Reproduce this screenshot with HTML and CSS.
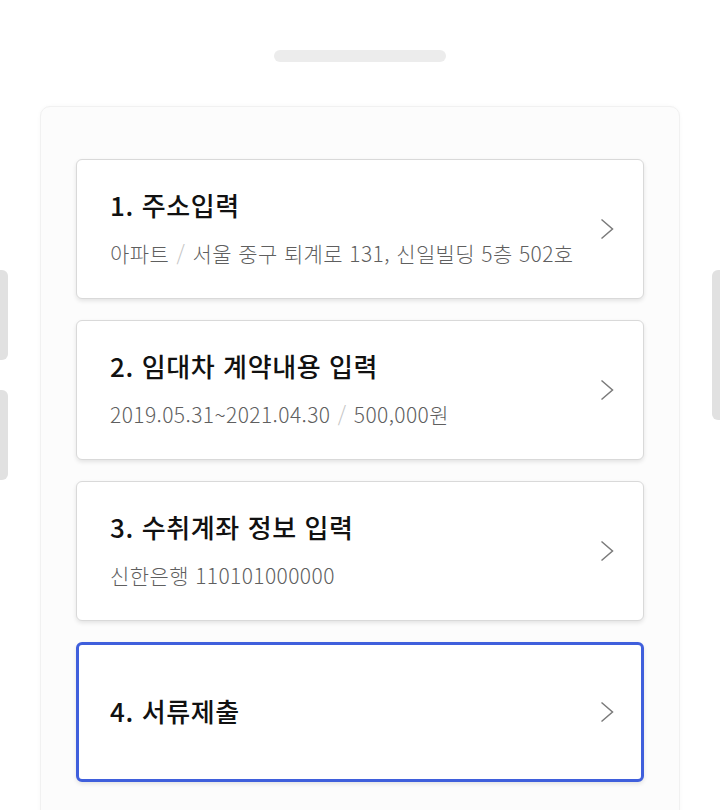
FILE: index.html
```html
<!DOCTYPE html>
<html lang="ko">
<head>
<meta charset="utf-8">
<title>신청</title>
<link rel="stylesheet" href="styles.css">
</head>
<body>
<div class="sheet">
  <div class="handle"></div>
  <div class="stage">
    <div class="side side-left">
      <div class="peek peek-l1"></div>
      <div class="peek peek-l2"></div>
    </div>
    <div class="panel">
      <a class="card">
        <div class="card-text">
          <div class="title">1. 주소입력</div>
          <div class="sub">아파트 <span class="sep">/</span> 서울 중구 퇴계로 131, 신일빌딩 5층 502호</div>
        </div>
        <svg class="chev" width="14" height="22" viewBox="0 0 14 22"><path d="M1.5 1.5 L12.5 11 L1.5 20.5" fill="none" stroke="#7a7a7a" stroke-width="1.5"/></svg>
      </a>
      <a class="card">
        <div class="card-text">
          <div class="title">2. 임대차 계약내용 입력</div>
          <div class="sub">2019.05.31~2021.04.30 <span class="sep">/</span> 500,000원</div>
        </div>
        <svg class="chev" width="14" height="22" viewBox="0 0 14 22"><path d="M1.5 1.5 L12.5 11 L1.5 20.5" fill="none" stroke="#7a7a7a" stroke-width="1.5"/></svg>
      </a>
      <a class="card">
        <div class="card-text">
          <div class="title">3. 수취계좌 정보 입력</div>
          <div class="sub">신한은행 110101000000</div>
        </div>
        <svg class="chev" width="14" height="22" viewBox="0 0 14 22"><path d="M1.5 1.5 L12.5 11 L1.5 20.5" fill="none" stroke="#7a7a7a" stroke-width="1.5"/></svg>
      </a>
      <a class="card card-active">
        <div class="card-text">
          <div class="title">4. 서류제출</div>
        </div>
        <svg class="chev" width="14" height="22" viewBox="0 0 14 22"><path d="M1.5 1.5 L12.5 11 L1.5 20.5" fill="none" stroke="#7a7a7a" stroke-width="1.5"/></svg>
      </a>
    </div>
    <div class="side side-right">
      <div class="peek peek-r1"></div>
    </div>
  </div>
</div>
</body>
</html>
```

FILE: styles.css
```css
html, body {
  margin: 0;
  padding: 0;
  background: #ffffff;
  overflow: hidden;
}
body {
  font-family: "Noto Sans CJK KR", "Noto Sans", sans-serif;
  color: #111;
}
.sheet {
  padding-top: 50px;
}
.handle {
  width: 172px;
  height: 12px;
  margin: 0 auto;
  border-radius: 6px;
  background: #ececec;
}
.stage {
  display: flex;
  justify-content: space-between;
  align-items: flex-start;
  margin-top: 44px;
}
.side {
  width: 8px;
  display: flex;
  flex-direction: column;
  gap: 30px;
  margin-top: 164px;
}
.peek {
  background: #e1e1e1;
}
.peek-l1, .peek-l2 {
  height: 90px;
  border-radius: 0 6px 6px 0;
}
.peek-r1 {
  height: 150px;
  border-radius: 6px 0 0 6px;
}
.panel {
  box-sizing: border-box;
  width: 640px;
  min-height: 760px;
  padding: 52px 35px 0 35px;
  background: #fcfcfc;
  border: 1px solid #f1f1f1;
  border-radius: 10px;
  box-shadow: 0 0 4px rgba(0, 0, 0, 0.03);
  display: flex;
  flex-direction: column;
  gap: 21px;
}
.card {
  box-sizing: border-box;
  height: 140px;
  display: flex;
  align-items: center;
  justify-content: space-between;
  padding: 0 29px 0 33px;
  background: #ffffff;
  border: 1px solid #d9d9d9;
  border-radius: 6px;
  box-shadow: 0 2px 4px rgba(0, 0, 0, 0.10);
  color: inherit;
  text-decoration: none;
}
.card-active {
  border: 3px solid #3f5fdc;
  padding: 0 27px 0 31px;
}
.card-text {
  display: flex;
  flex-direction: column;
  gap: 15px;
  margin-bottom: 3px;
}
.title {
  font-size: 26px;
  line-height: 36px;
  font-weight: 500;
  color: #111111;
  letter-spacing: 0.6px;
}
.sub {
  font-size: 21px;
  line-height: 30px;
  font-weight: 300;
  color: #5f5f5f;
  letter-spacing: 0.4px;
}
.sep {
  color: #c4c4c4;
  padding: 0 1px;
}
.chev {
  flex: none;
  display: block;
}
```
